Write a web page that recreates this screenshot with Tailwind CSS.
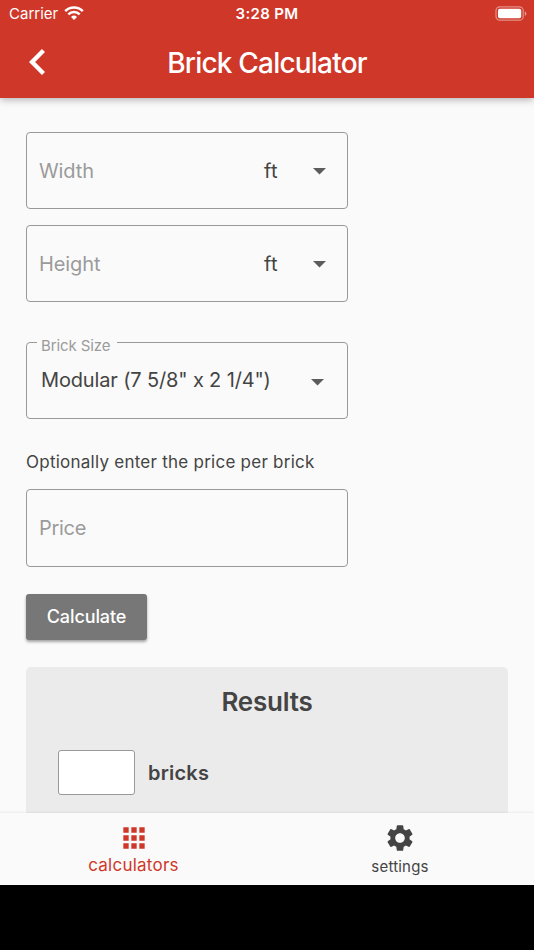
<!DOCTYPE html>
<html lang="en">
<head>
    <meta charset="UTF-8">
    <meta name="viewport" content="width=device-width, initial-scale=1.0">
    <title>Brick Calculator</title>
    <script src="https://cdn.jsdelivr.net/npm/@tailwindcss/browser@4"></script>
</head>
<body class="bg-black font-['Inter',sans-serif] text-[#444]">
    <div class="flex h-[950px] w-[534px] flex-col overflow-hidden">
        <header class="relative z-10 h-[98px] shrink-0 bg-[#cf3729] text-white shadow-[0_1px_8px_rgba(0,0,0,0.35)]">
            <!-- Status bar -->
            <div class="grid h-[27px] grid-cols-3 items-center pr-[8px] pl-[8px]">
                <div class="flex items-center gap-[6px] pl-px">
                    <span class="text-[15px] leading-none">Carrier</span>
                    <svg class="-mt-px h-[14px] w-5" viewBox="0 0 20 14" fill="none" stroke="currentColor" stroke-width="2.5">
                        <path d="M1.2 5.1a12.6 12.6 0 0 1 17.6 0"/>
                        <path d="M4.3 8.3a8.2 8.2 0 0 1 11.4 0"/>
                        <path d="M10 14l-3-3.1a4.3 4.3 0 0 1 6 0z" fill="currentColor" stroke="none"/>
                    </svg>
                </div>
                <span class="text-center text-[15px] leading-none font-semibold tracking-[0.35px]">3:28 PM</span>
                <svg class="-mr-px -mt-px h-[15px] w-[32px] justify-self-end" viewBox="0 0 32 15">
                    <rect x="1" y="0.8" width="27.2" height="13.4" rx="3.8" fill="none" stroke="white" stroke-opacity="0.45" stroke-width="1.2"/>
                    <rect x="3" y="2.8" width="23.2" height="9.4" rx="1.8" fill="white"/>
                    <path d="M29.8 5.2a2.6 2.6 0 0 1 0 4.8z" fill="white" fill-opacity="0.5"/>
                </svg>
            </div>
            <div class="grid h-[70px] grid-cols-[72px_1fr_72px] items-center">
                <svg class="ml-[28.5px] h-[26px] w-4" viewBox="8 6 7.41 12" fill="currentColor">
                    <path d="M15.41 7.41L14 6l-6 6 6 6 1.41-1.41L10.83 12z"/>
                </svg>
                <h1 class="pt-px text-center text-[28px] leading-none font-medium tracking-[-0.8px]">Brick Calculator</h1>
            </div>
        </header>

        <main class="min-h-0 flex-1 overflow-hidden bg-[#fafafa] px-[26px] pt-[34px]">
            <div class="flex w-[322px] flex-col">
                <div class="flex h-[77px] items-center rounded-[4px] border border-[#999] pr-[21px] pl-3">
                    <span class="flex-1 text-[20px] tracking-[-0.1px] text-[#9b9b9b]">Width</span>
                    <span class="mr-[35px] text-[20px] tracking-[0.4px]">ft</span>
                    <svg class="mt-px h-[7px] w-[13px]" viewBox="0 0 13 7" fill="#5c5c5c"><path d="M0 0h13L6.5 6.5z"/></svg>
                </div>
                <div class="mt-4 flex h-[77px] items-center rounded-[4px] border border-[#999] pr-[21px] pl-3">
                    <span class="flex-1 text-[20px] tracking-[-0.1px] text-[#9b9b9b]">Height</span>
                    <span class="mr-[35px] text-[20px] tracking-[0.4px]">ft</span>
                    <svg class="mt-px h-[7px] w-[13px]" viewBox="0 0 13 7" fill="#5c5c5c"><path d="M0 0h13L6.5 6.5z"/></svg>
                </div>

                <div class="relative mt-10 flex h-[77px] items-center rounded-[4px] border border-[#999] pr-[23px] pl-[14px]">
                    <!-- Floating label sits in the notch of the border -->
                    <span class="absolute -top-[6px] left-[10px] bg-[#fafafa] pr-[7px] pl-1 text-[15px] leading-[18px] tracking-[-0.1px] text-[#9b9b9b]">Brick Size</span>
                    <span class="flex-1 pb-[2px] text-[20px] tracking-[-0.15px] whitespace-nowrap">Modular (7 5/8" x 2 1/4")</span>
                    <svg class="mt-[3px] h-[7px] w-[13px]" viewBox="0 0 13 7" fill="#5c5c5c"><path d="M0 0h13L6.5 6.5z"/></svg>
                </div>

                <p class="mt-8 text-[17px] leading-[22px] tracking-[0.25px] whitespace-nowrap">Optionally enter the price per brick</p>
                <div class="mt-4 flex h-[78px] items-center rounded-[4px] border border-[#999] px-3">
                    <span class="text-[20px] tracking-[-0.3px] text-[#9b9b9b]">Price</span>
                </div>
                <button class="mt-[27px] h-[46px] w-[121px] rounded-[3px] bg-[#777] pb-px text-[18px] font-medium tracking-[-0.1px] text-white shadow-[0_2px_3px_rgba(0,0,0,0.35)]">Calculate</button>
            </div>

            <section class="mt-[27px] h-[240px] rounded-[5px] bg-[#ebebeb] px-8 pt-[19px]">
                <h2 class="text-center text-[26px] leading-8 font-semibold tracking-[-0.2px]">Results</h2>
                <div class="mt-8 flex items-center gap-[13px]">
                    <div class="h-[45px] w-[77px] rounded-[3px] border border-[#999] bg-white"></div>
                    <span class="text-[20px] font-semibold tracking-[0.2px]">bricks</span>
                </div>
            </section>
        </main>

        <nav class="z-10 grid h-[72px] shrink-0 grid-cols-2 bg-[#fafafa] shadow-[0_-1px_2px_rgba(0,0,0,0.06)]">
            <a class="flex flex-col items-center pt-[9px] text-[#cf3729]">
                <svg class="size-8" viewBox="0 0 24 24" fill="currentColor">
                    <path d="M4 8h4V4H4v4zm6 12h4v-4h-4v4zm-6 0h4v-4H4v4zm0-6h4v-4H4v4zm6 0h4v-4h-4v4zm6-10v4h4V4h-4zm-6 4h4V4h-4v4zm6 6h4v-4h-4v4zm0 6h4v-4h-4v4z"/>
                </svg>
                <span class="mt-px text-[17px] leading-5 tracking-[0.25px]">calculators</span>
            </a>
            <a class="flex flex-col items-center pt-[9px]">
                <svg class="-ml-px size-8" viewBox="0 0 24 24" fill="currentColor">
                    <path d="M19.14 12.94c.04-.3.06-.61.06-.94 0-.32-.02-.64-.07-.94l2.03-1.58c.18-.14.23-.41.12-.61l-1.92-3.32c-.12-.22-.37-.29-.59-.22l-2.39.96c-.5-.38-1.03-.7-1.62-.94l-.36-2.54c-.04-.24-.24-.41-.48-.41h-3.84c-.24 0-.43.17-.47.41l-.36 2.54c-.59.24-1.13.57-1.62.94l-2.39-.96c-.22-.08-.47 0-.59.22L2.74 8.87c-.12.21-.08.47.12.61l2.03 1.58c-.05.3-.09.63-.09.94s.02.64.07.94l-2.03 1.58c-.18.14-.23.41-.12.61l1.92 3.32c.12.22.37.29.59.22l2.39-.96c.5.38 1.03.7 1.62.94l.36 2.54c.05.24.24.41.48.41h3.84c.24 0 .44-.17.47-.41l.36-2.54c.59-.24 1.13-.56 1.62-.94l2.39.96c.22.08.47 0 .59-.22l1.92-3.32c.12-.22.07-.47-.12-.61l-2.01-1.58zM12 15.6c-1.98 0-3.6-1.62-3.6-3.6s1.62-3.6 3.6-3.6 3.6 1.62 3.6 3.6-1.62 3.6-3.6 3.6z"/>
                </svg>
                <span class="mt-[3px] -ml-px text-[15px] leading-5 tracking-[0.2px]">settings</span>
            </a>
        </nav>
        <div class="h-[65px] shrink-0 bg-black"></div>
    </div>
</body>
</html>
